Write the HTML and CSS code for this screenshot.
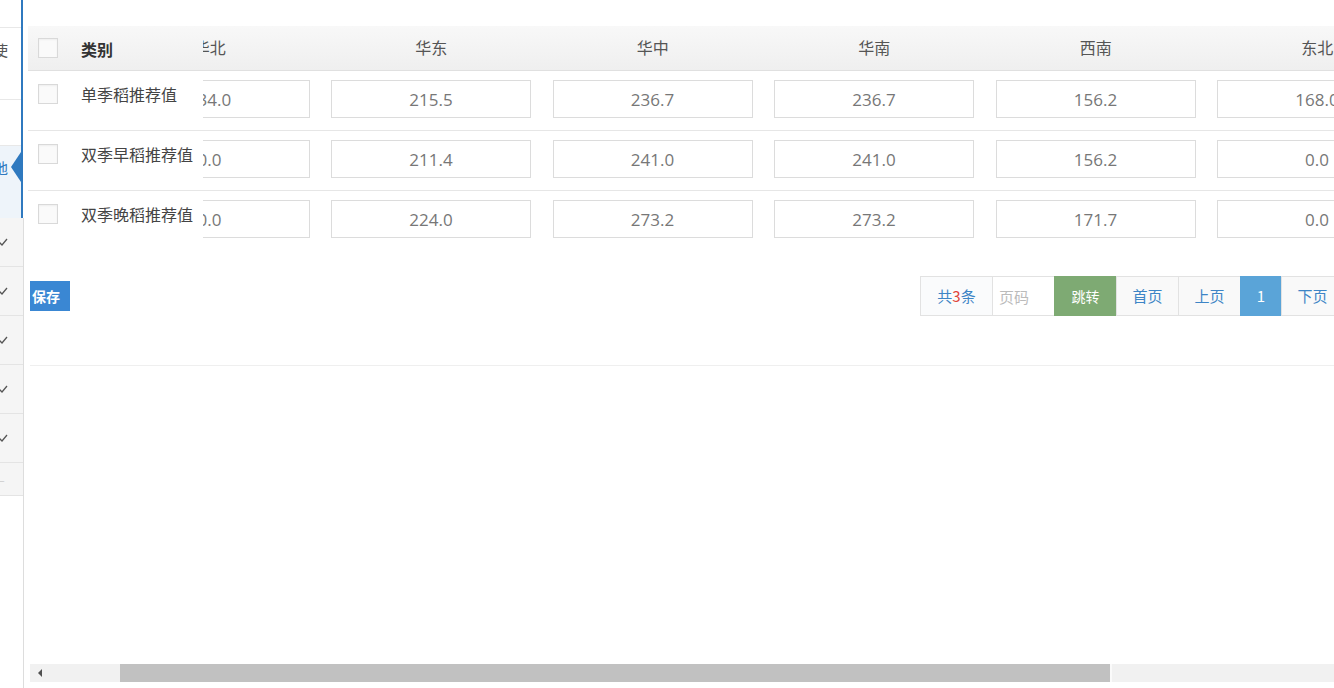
FILE: index.html
```html
<!DOCTYPE html>
<html lang="zh-CN">
<head>
    <meta charset="UTF-8">
    <title>推荐值设置</title>
    <link rel="stylesheet" href="styles.css">
</head>
<body>
<div class="page">
    <aside class="side">
        <div class="side-top">
            <div class="side-item blank"></div>
            <div class="side-item tall"><span class="side-text">使</span></div>
            <div class="side-item short"></div>
            <div class="side-item tall active"><span class="side-text">地</span><i class="pointer"></i></div>
        </div>
        <ul class="side-list">
            <li><svg width="10" height="8" viewBox="0 0 10 8"><polyline points="1,4 4,7 9,1" fill="none" stroke="#555" stroke-width="1.3"/></svg></li>
            <li><svg width="10" height="8" viewBox="0 0 10 8"><polyline points="1,4 4,7 9,1" fill="none" stroke="#555" stroke-width="1.3"/></svg></li>
            <li><svg width="10" height="8" viewBox="0 0 10 8"><polyline points="1,4 4,7 9,1" fill="none" stroke="#555" stroke-width="1.3"/></svg></li>
            <li><svg width="10" height="8" viewBox="0 0 10 8"><polyline points="1,4 4,7 9,1" fill="none" stroke="#555" stroke-width="1.3"/></svg></li>
            <li><svg width="10" height="8" viewBox="0 0 10 8"><polyline points="1,4 4,7 9,1" fill="none" stroke="#555" stroke-width="1.3"/></svg></li>
            <li class="more">—</li>
        </ul>
        <div class="side-rest"></div>
    </aside>

    <main class="main">
        <div class="grid">
            <div class="grid-fixed">
                <div class="fix-head"><span class="cb"></span><span class="name head-name">类别</span></div>
                <div class="fix-row"><span class="cb"></span><span class="name">单季稻推荐值</span></div>
                <div class="fix-row"><span class="cb"></span><span class="name">双季早稻推荐值</span></div>
                <div class="fix-row"><span class="cb"></span><span class="name">双季晚稻推荐值</span></div>
            </div>
            <div class="grid-scroll">
                <div class="cols" style="margin-left:-104px">
                    <div class="scroll-head">
                        <div class="head-cell">华北</div>
                        <div class="head-cell">华东</div>
                        <div class="head-cell">华中</div>
                        <div class="head-cell">华南</div>
                        <div class="head-cell">西南</div>
                        <div class="head-cell">东北</div>
                    </div>
                    <div class="scroll-row">
                        <div class="cell"><input value="134.0"></div>
                        <div class="cell"><input value="215.5"></div>
                        <div class="cell"><input value="236.7"></div>
                        <div class="cell"><input value="236.7"></div>
                        <div class="cell"><input value="156.2"></div>
                        <div class="cell"><input value="168.0"></div>
                    </div>
                    <div class="scroll-row">
                        <div class="cell"><input value="0.0"></div>
                        <div class="cell"><input value="211.4"></div>
                        <div class="cell"><input value="241.0"></div>
                        <div class="cell"><input value="241.0"></div>
                        <div class="cell"><input value="156.2"></div>
                        <div class="cell"><input value="0.0"></div>
                    </div>
                    <div class="scroll-row">
                        <div class="cell"><input value="0.0"></div>
                        <div class="cell"><input value="224.0"></div>
                        <div class="cell"><input value="273.2"></div>
                        <div class="cell"><input value="273.2"></div>
                        <div class="cell"><input value="171.7"></div>
                        <div class="cell"><input value="0.0"></div>
                    </div>
                </div>
            </div>
        </div>

        <div class="toolbar">
            <button class="btn-save">保存</button>
            <div class="pager">
                <span class="pg-item pg-total">共<em>3</em>条</span>
                <input class="pg-input" placeholder="页码">
                <span class="pg-item pg-go">跳转</span>
                <a class="pg-item">首页</a>
                <a class="pg-item">上页</a>
                <a class="pg-item pg-cur">1</a>
                <a class="pg-item">下页</a>
                <a class="pg-item">尾页</a>
            </div>
        </div>

        <div class="hscroll">
            <span class="hs-btn"><i class="hs-arrow"></i></span>
            <span class="hs-thumb" style="margin-left:70px; width:992px"></span>
        </div>
    </main>
</div>
</body>
</html>
```

FILE: styles.css
```css
* {
    box-sizing: border-box;
}
body {
    margin: 0;
    font-family: "Noto Sans CJK SC", "Open Sans", sans-serif;
    color: #333;
    background: #fff;
    overflow: hidden;
}
.page {
    display: flex;
    height: 688px;
}

/* left menu, mostly scrolled out of view */
.side {
    width: 24px;
    flex: none;
    display: flex;
    flex-direction: column;
    overflow: hidden;
}
.side-top {
    width: 23px;
    border-right: 2px solid #2f79bf;
}
.side-item {
    position: relative;
    border-bottom: 1px solid #e8e8e8;
    padding-top: 12px;
    font-size: 15px;
    line-height: 20px;
    color: #555;
    white-space: nowrap;
}
.side-item.blank {
    height: 28px;
    padding: 0;
}
.side-item.tall {
    height: 72px;
}
.side-item.short {
    height: 46px;
}
.side-item.active {
    background: #eef4fa;
    color: #2f79bf;
    border-bottom: none;
}
.side-text {
    display: block;
    margin-left: -7px;
}
.pointer {
    position: absolute;
    right: 0;
    top: 6px;
    border-right: 10px solid #2f79bf;
    border-top: 15px solid transparent;
    border-bottom: 15px solid transparent;
}
.side-list {
    list-style: none;
    margin: 0;
    padding: 0;
    background: #f5f5f5;
    border-right: 1px solid #ddd;
}
.side-list li {
    height: 49px;
    border-bottom: 1px solid #e4e4e4;
    display: flex;
    align-items: center;
    margin-left: -2px;
}
.side-list li.more {
    height: 33px;
    color: #ccc;
    font-size: 12px;
    margin-left: -6px;
}
.side-rest {
    flex: 1;
    border-right: 1px solid #ddd;
}

/* main */
.main {
    flex: 1;
    min-width: 0;
    display: flex;
    flex-direction: column;
    padding-left: 4px;
    overflow: hidden;
}
.grid {
    display: flex;
    margin-top: 26px;
}
.grid-fixed {
    width: 175px;
    flex: none;
}
.fix-head, .scroll-head {
    height: 45px;
    background: linear-gradient(#f8f8f8, #efefef);
    border-bottom: 1px solid #e0e0e0;
}
.fix-head {
    display: flex;
    align-items: center;
    padding-left: 10px;
}
.fix-row {
    height: 60px;
    border-bottom: 1px solid #e6e6e6;
    display: flex;
    align-items: flex-start;
    padding: 13px 0 0 10px;
}
.fix-row:last-child, .scroll-row:last-child {
    border-bottom-color: transparent;
}
.cb {
    width: 20px;
    height: 20px;
    flex: none;
    border: 1px solid #d9d9d9;
    background: #fafafa;
    box-shadow: inset 0 1px 2px rgba(0, 0, 0, 0.05);
}
.name {
    margin-left: 23px;
    font-size: 16px;
    line-height: 20px;
    color: #444;
    white-space: nowrap;
}
.head-name {
    font-weight: bold;
    color: #333;
    margin-top: 2px;
}
.grid-scroll {
    flex: 1;
    overflow: hidden;
}
.cols {
    width: 1329px;
}
.scroll-head, .scroll-row {
    display: grid;
    grid-template-columns: repeat(6, 221.5px);
}
.head-cell {
    text-align: center;
    font-size: 16px;
    line-height: 42px;
    color: #555;
}
.scroll-row {
    height: 60px;
    border-bottom: 1px solid #e6e6e6;
}
.cell {
    padding: 9px 10.5px 0;
}
.cell input {
    width: 200px;
    height: 38px;
    border: 1px solid #dcdcdc;
    font-family: "Open Sans", sans-serif;
    font-size: 17px;
    color: #777;
    text-align: center;
    outline: none;
    padding: 0;
}

/* save + paging */
.toolbar {
    width: 1376px;
    height: 115px;
    margin-left: 2px;
    border-bottom: 1px solid #efefef;
    display: flex;
    align-items: flex-start;
    justify-content: space-between;
    padding-top: 25px;
}
.btn-save {
    margin-top: 5px;
    width: 40px;
    height: 30px;
    padding: 0 2px;
    text-align: left;
    border: none;
    background: #3a87d3;
    color: #fff;
    font-family: "Noto Sans CJK SC", sans-serif;
    font-size: 14px;
    font-weight: bold;
}
.pager {
    display: flex;
    height: 40px;
}
.pg-item, .pg-input {
    height: 40px;
    width: 63px;
    margin-left: -1px;
    border: 1px solid #e2e2e2;
    background: #f9f9f9;
    color: #3d85c6;
    font-size: 15px;
    line-height: 38px;
    text-align: center;
    font-family: "Noto Sans CJK SC", sans-serif;
}
.pg-total {
    width: 73px;
    background: #fafbfc;
}
.pg-total em {
    font-style: normal;
    color: #e0463a;
}
.pg-input {
    width: 63px;
    background: #fff;
    padding: 0 0 0 6px;
    text-align: left;
    outline: none;
}
.pg-input::placeholder {
    color: #bbb;
}
.pg-go {
    background: #7eaa73;
    border-color: #7eaa73;
    color: #fff;
    font-size: 14px;
}
.pg-cur {
    width: 42px;
    background: #5aa4d8;
    border-color: #5aa4d8;
    color: #fff;
}

/* horizontal scrollbar of the grid */
.hscroll {
    margin: auto 0 6px 2px;
    height: 18px;
    display: flex;
    background: #f1f1f1;
    flex: none;
}
.hs-btn {
    width: 20px;
    display: flex;
    align-items: center;
    justify-content: center;
}
.hs-arrow {
    border-right: 4px solid #505050;
    border-top: 4px solid transparent;
    border-bottom: 4px solid transparent;
}
.hs-thumb {
    background: #c1c1c1;
    border-right: 2px solid #fafafa;
}
```
